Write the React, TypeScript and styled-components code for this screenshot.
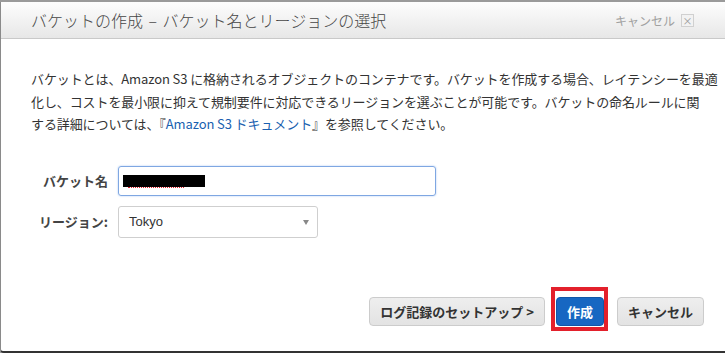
import React from "react"
import styled, { createGlobalStyle } from "styled-components"

const GlobalStyle = createGlobalStyle`
  html, body {
    margin: 0;
    padding: 0;
    background: #9a9a9a;
    font-family: "Noto Sans CJK JP", "Liberation Sans", sans-serif;
  }
`

const Page = styled.div`
  height: 353px;
  padding-top: 2px;
  box-sizing: border-box;
  overflow: hidden;
`

const Dialog = styled.div`
  height: 351px;
  box-sizing: border-box;
  background: #fff;
  border-left: 1px solid #8a8a8a;
  border-bottom: 2px solid #333;
  border-bottom-left-radius: 4px;
  display: flex;
  flex-direction: column;
`

const Header = styled.div`
  height: 36px;
  flex: none;
  display: flex;
  align-items: center;
  justify-content: space-between;
  padding: 0 31px 0 30px;
  background: linear-gradient(#fdfdfd, #e7e7e7);
  border-bottom: 1px solid #c9c9c9;
`

const Title = styled.h1`
  margin: 0;
  font-size: 16px;
  font-weight: 300;
  color: #454545;
  word-spacing: 2px;
`

const HeaderCancel = styled.div`
  display: flex;
  align-items: center;
  gap: 6px;
  font-size: 12px;
  color: #a0a0a0;
`

const CloseBox = styled.span`
  width: 11px;
  height: 11px;
  border: 1px solid #d0d0d0;
  background: #f2f2f2;
  color: #9a9a9a;
  font-size: 10px;
  line-height: 11px;
  text-align: center;
`

const Body = styled.div`
  flex: 1;
  padding: 29px 10px 0 30px;
`

const Intro = styled.p`
  margin: 0;
  font-size: 13px;
  line-height: 22.5px;
  color: #333;
  white-space: nowrap;
  letter-spacing: -0.1px;
`

const DocLink = styled.a`
  color: #1a5fb0;
  text-decoration: none;
`

const Form = styled.div`
  margin-top: 30px;
  display: grid;
  grid-template-columns: 77px auto;
  column-gap: 10px;
  row-gap: 10px;
  align-items: center;
`

const Label = styled.label`
  text-align: right;
  font-size: 13px;
  font-weight: bold;
  color: #444;
  white-space: nowrap;
`

const TextBox = styled.div`
  width: 318px;
  height: 30px;
  box-sizing: border-box;
  border: 1px solid #7fa7e2;
  border-radius: 3px;
  box-shadow: 0 0 2px #a8c6f2;
  display: flex;
  align-items: center;
  padding-left: 4px;
`

const Redacted = styled.span`
  position: relative;
  width: 82px;
  height: 12px;
  background: #000;
  &::after {
    content: "";
    position: absolute;
    left: 5px;
    top: 12px;
    width: 56px;
    border-bottom: 1px dotted #e0202a;
  }
`

const SelectBox = styled.div`
  width: 200px;
  height: 32px;
  box-sizing: border-box;
  border: 1px solid #cfcfcf;
  border-radius: 3px;
  display: flex;
  align-items: center;
  justify-content: space-between;
  padding: 0 8px 0 10px;
  font-size: 13px;
  color: #333;
  font-family: "Liberation Sans", "Noto Sans CJK JP", sans-serif;
`

const Caret = styled.span`
  width: 0;
  height: 0;
  border-left: 3px solid transparent;
  border-right: 3px solid transparent;
  border-top: 5px solid #888;
  margin-top: 2px;
`

const Footer = styled.div`
  display: flex;
  justify-content: flex-end;
  align-items: center;
  padding: 0 21px 25px 0;
`

const Button = styled.button<{ primary?: boolean }>`
  position: relative;
  height: 29px;
  padding: 0 10px;
  border-radius: 4px;
  font-family: inherit;
  font-size: 13px;
  font-weight: bold;
  border: 1px solid ${p => (p.primary ? "#1256a6" : "#cccccc")};
  background: ${p => (p.primary ? "#1767c2" : "linear-gradient(#eeeeee, #e3e3e3)")};
  color: ${p => (p.primary ? "#fff" : "#333")};
  margin: ${p => (p.primary ? "0 13px 0 11px" : "0")};
`

const Highlight = styled.span`
  position: absolute;
  top: -11px;
  bottom: -6px;
  left: -6px;
  right: -5px;
  border: 4px solid #e3202b;
`

export default function App() {
  return (
    <Page>
      <GlobalStyle />
      <Dialog>
        <Header>
          <Title>バケットの作成 – バケット名とリージョンの選択</Title>
          <HeaderCancel>
            キャンセル <CloseBox>×</CloseBox>
          </HeaderCancel>
        </Header>
        <Body>
          <Intro>
            バケットとは、Amazon S3 に格納されるオブジェクトのコンテナです。バケットを作成する場合、レイテンシーを最適
            <br />
            化し、コストを最小限に抑えて規制要件に対応できるリージョンを選ぶことが可能です。バケットの命名ルールに関
            <br />
            する詳細については、『<DocLink href="#">Amazon S3 ドキュメント</DocLink>』を参照してください。
          </Intro>
          <Form>
            <Label>バケット名</Label>
            <TextBox>
              <Redacted />
            </TextBox>
            <Label>リージョン:</Label>
            <SelectBox>
              Tokyo
              <Caret />
            </SelectBox>
          </Form>
        </Body>
        <Footer>
          <Button>ログ記録のセットアップ &gt;</Button>
          <Button primary>
            作成
            <Highlight />
          </Button>
          <Button>キャンセル</Button>
        </Footer>
      </Dialog>
    </Page>
  )
}
